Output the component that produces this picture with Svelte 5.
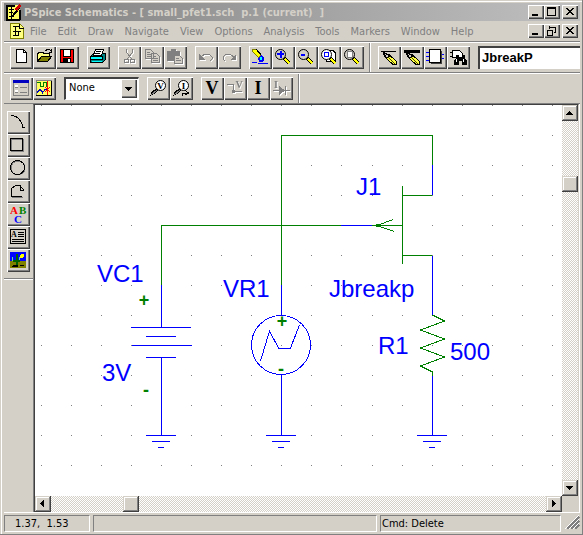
<script>
  const pencil =
    '<path d="M5 6.500l3.500 6M5 6.500l7 3" stroke="#000" stroke-width="1.500" fill="none"/><path d="M8.500 12.500l3.500-3 6.500 6v3h-3.500z" fill="#ffff40" stroke="#000"/><path d="M10 11l7 7" stroke="#404000" fill="none"/>';
  const lens = (fill) =>
    `<path d="M12.500 12.500l5 5" stroke="#000" stroke-width="3.500"/><path d="M13 13l4.500 4.500" stroke="#ffff00" stroke-width="1.600"/><circle cx="8.500" cy="8.500" r="5" fill="${fill}" stroke="#000" shape-rendering="auto"/>`;
  const probe = (letter) =>
    `<path d="M3 19l1.500-4 5-4 2 2-4 4z" fill="#000"/><path d="M4 18l6-5" stroke="#808080"/><circle cx="13.500" cy="8.500" r="5" fill="#fff" stroke="#000" shape-rendering="auto"/><text x="13.500" y="12" font-size="9" font-weight="bold" text-anchor="middle">${letter}</text>`;

  const icons = {
    new: '<path d="M6.500 3.500h7l3 3v10h-10z" fill="#fff" stroke="#000"/><path d="M13.500 3.500v3h3" fill="none" stroke="#000"/>',
    open: '<path d="M4.500 16v-9h1l1-1h3l1 1h6v3" fill="#ffff80" stroke="#000"/><path d="M4.500 15.500l4-5h10l-4 5z" fill="#808000" stroke="#000"/><path d="M12.500 4.500l2-1h2l2 2M18.500 3v3h-3" fill="none" stroke="#000"/>',
    save: '<rect x="4.500" y="3.500" width="13" height="13" fill="#f00" stroke="#000"/><rect x="7" y="4" width="8" height="6" fill="#fff"/><path d="M7.500 4v6h7v-6" fill="none" stroke="#000"/><rect x="7" y="12" width="8" height="5" fill="#000"/><rect x="12" y="13" width="2" height="3" fill="#fff"/>',
    print: '<path d="M3.500 10.500l3-3h12v6l-3 3h-12z" fill="#008080" stroke="#000"/><path d="M6.500 9.500l2-6h8l-2 6z" fill="#fff" stroke="#000"/><path d="M9 5.500h5M8 7.500h5" stroke="#000"/><rect x="3.500" y="10.500" width="12" height="3" fill="#00ffff" stroke="#000"/><path d="M5 15.500h10" stroke="#00ffff"/>',
    cut: '<path d="M8.500 3v3l5 7M14.500 3v3l-5 7" fill="none" stroke="#808080"/><circle cx="8.500" cy="15" r="2" fill="none" stroke="#808080"/><circle cx="14.500" cy="15" r="2" fill="none" stroke="#808080"/>',
    copy: '<path d="M4.500 3.500h5l3 3v6h-8zM10.500 7.500h5l3 3v6h-8z" fill="#d4d0c8" stroke="#808080"/><path d="M6 6.500h3M6 8.500h4M6 10.500h4M12 10.500h3M12 12.500h5M12 14.500h5" stroke="#808080"/>',
    paste: '<path d="M3 5h4v-2h5v2h4v10h-13z" fill="#808080"/><path d="M10.500 9.500h5l3 3v5h-8z" fill="#d4d0c8" stroke="#808080"/><path d="M12 12.500h3M12 14.500h5" stroke="#808080"/>',
    undo: '<path d="M4 8v6h6z" fill="#808080"/><path d="M6 11l4-3h4l3 3v2l-2 2" fill="none" stroke="#808080"/>',
    redo: '<path d="M18 8v6h-6z" fill="#808080"/><path d="M16 11l-4-3h-4l-3 3v2l2 2" fill="none" stroke="#808080"/>',
    brush: '<path d="M3 4l2-1h2l5 6-2 3-7-7z" fill="#ffff00" stroke="#808000"/><path d="M7 3l6 7" stroke="#000"/><path d="M9 12l3-3 3 3v3l-2 1h-3z" fill="#0000ff"/><rect x="11" y="11" width="2" height="3" fill="#00ffff"/><path d="M3 16.500h5M9 17.500h5M14 17.500h5" stroke="#0000ff"/>',
    zoomIn: lens('#d4d0c8') + '<path d="M5 8h7M8.500 5v7" stroke="#0000ff" stroke-width="2"/>',
    zoomOut: lens('#d4d0c8') + '<path d="M6 8.500h4" stroke="#0000ff" stroke-width="2"/>',
    zoomArea: '<path d="M8 4.500h7l2 2v9h-9z" fill="#fff" stroke="#000"/>' + lens('#fff') + '<rect x="6.500" y="6.500" width="4" height="4" fill="#fff" stroke="#0000ff"/>',
    zoomPage: lens('#d4d0c8') + '<rect x="6.500" y="5.500" width="5" height="6" fill="#fff" stroke="#808080"/>',
    wire: '<path d="M3 5.500h15" stroke="#000"/>' + pencil,
    bus: '<path d="M3 5.500h16" stroke="#000" stroke-width="3"/>' + pencil,
    part: '<path d="M2 6.500h4M2 10.500h4M2 14.500h4M16 8.500h4M16 12.500h4" stroke="#0000ff"/><rect x="5.500" y="3.500" width="11" height="13" fill="#fff" stroke="#000"/><path d="M7 17.500h10.500v-13" fill="none" stroke="#404040"/>',
    find: '<path d="M5.500 4v8M5.500 4.500h7l3 3v4h-10M3 6.500h3M3 10.500h3" fill="#fff" stroke="#000"/><path d="M9 9h3v2h3v-2h3v3l2 3v4h-5v-4h-3v4h-5v-4l2-3z" fill="#000"/><path d="M9.500 13v3M16.500 13v3" stroke="#fff"/>',
    setup: '<rect x="3.500" y="3.500" width="15" height="15" fill="#d4d0c8" stroke="#808080"/><path d="M3 4.500h16" stroke="#0000c0" stroke-width="3"/><path d="M5 9.500h3M5 14.500h3" stroke="#fff" stroke-width="3"/><path d="M5 10.500h3M10 10.500h7M5 15.500h3M10 15.500h7" stroke="#808080"/>',
    simulate: '<rect x="3.500" y="3.500" width="15" height="15" fill="#ffff60" stroke="#808080"/><path d="M4 5.500h3v4h3v-4h3v4h2" fill="none" stroke="#008000"/><path d="M4 15.500l3-3 2 2v2l3-4h2" fill="none" stroke="#0000c0"/><path d="M14.500 4v14M12 10l5 5M12 15l5-5" fill="none" stroke="#f00"/><path d="M3 18.500h16M18.500 4v15" stroke="#000"/>',
    probeV: probe('V'),
    probeI: probe('I') + '<path d="M12.500 19v-3h5M15.500 13.500l3 2.500-3 2" fill="none" stroke="#000"/>',
    showV: '<text x="11" y="17" font-size="18" font-weight="bold" text-anchor="middle">V</text>',
    showI: '<text x="11" y="17" font-size="18" font-weight="bold" text-anchor="middle">I</text>',
    netV: '<path d="M3 7.500h6v7h9" fill="none" stroke="#808080"/><circle cx="9.500" cy="14.500" r="1.500" fill="#808080"/><text x="15" y="11" font-size="10" font-weight="bold" text-anchor="middle" fill="#808080">V</text>',
    netI: '<path d="M3 13.500h17M15.500 9v9" stroke="#808080"/><path d="M9 9v9l6-4.500z" fill="#808080"/><text x="6" y="11" font-size="10" font-weight="bold" text-anchor="middle" fill="#808080">I</text>',
    arc: '<path d="M4 4.500c6 0 11 5 12 12h2" fill="none" stroke="#000"/>',
    box: '<rect x="4.500" y="5.500" width="12" height="12" fill="none" stroke="#808080"/><rect x="3.500" y="4.500" width="12" height="12" fill="none" stroke="#000"/>',
    circle: '<circle cx="11" cy="11" r="7" fill="none" stroke="#808080"/><circle cx="10.500" cy="10.500" r="7" fill="none" stroke="#000"/>',
    poly: '<path d="M5 17.500h11" stroke="#808080"/><path d="M15 16.500h-10.500v-8l4-3h5v5h3M13 6l4 4" fill="none" stroke="#000"/>',
    text: '<text x="3" y="11" font-size="11" font-weight="bold" fill="#f00">A</text><text x="12" y="11" font-size="11" font-weight="bold" fill="#008000">B</text><text x="7" y="20" font-size="11" font-weight="bold" fill="#00f">C</text>',
    note: '<rect x="3.500" y="3.500" width="15" height="14" fill="#d4d0c8" stroke="#000"/><path d="M11 6.500h6M11 8.500h6M11 10.500h6M5 13.500h12M5 15.500h12" stroke="#000"/><text x="4" y="11" font-size="8" font-weight="bold">A</text>',
    image: '<rect x="3" y="3" width="16" height="10" fill="#0000ff"/><rect x="3" y="12" width="16" height="7" fill="#808000"/><circle cx="15" cy="7" r="2" fill="#ffff00"/><path d="M9 5v11M5.500 8v3h4M12.500 8v3h-3" fill="none" stroke="#60e090"/><path d="M10 5v11M6 12h3M10 12h3" stroke="#006000" stroke-width="2"/><path d="M4 18l3-2h4v2zM13 16h4v1h-4z" fill="#000"/>'
  };

  const editGroups = [
    [['new', 'New'], ['open', 'Open'], ['save', 'Save']],
    [['print', 'Print']],
    [['cut', 'Cut', true], ['copy', 'Copy', true], ['paste', 'Paste', true]],
    [['undo', 'Undo', true], ['redo', 'Redo', true]],
    [['brush', 'Redraw'], ['zoomIn', 'Zoom in'], ['zoomOut', 'Zoom out'], ['zoomArea', 'Zoom area'], ['zoomPage', 'Fit page']]
  ];
  const drawGroup = [['wire', 'Draw wire'], ['bus', 'Draw bus'], ['part', 'Draw block'], ['find', 'Get new part']];
  const simGroup = [['setup', 'Setup analysis'], ['simulate', 'Simulate']];
  const markGroups = [
    [['probeV', 'Voltage marker'], ['probeI', 'Current marker']],
    [['showV', 'Show voltages'], ['netV', 'Toggle net voltage', true], ['showI', 'Show currents'], ['netI', 'Toggle pin current', true]]
  ];
  const shapes = [['arc', 'Arc'], ['box', 'Box'], ['circle', 'Circle'], ['poly', 'Polyline'], ['text', 'Text'], ['note', 'Text box'], ['image', 'Picture']];
  const menus = ['File', 'Edit', 'Draw', 'Navigate', 'View', 'Options', 'Analysis', 'Tools', 'Markers', 'Window', 'Help'];

  const dots = [];
  for (let r = 0; r < 13; r++) {
    for (let c = 0; c < 18; c++) dots.push([6 + 30 * c + (c > 10 ? 1 : 0), 30 * r]);
  }

  let marker = $state('None');
  let partName = $state('JbreakP');
</script>

{#snippet tool([id, label, off])}
  <button class="tool" class:off aria-label={label} title={label}>
    <svg width="23" height="23" viewBox="0 0 23 23">{@html icons[id]}</svg>
  </button>
{/snippet}

{#snippet caption(restore)}
  <div class="caption">
    <button aria-label="Minimize"><svg width="16" height="14"><path d="M4 10h6" stroke="#000" stroke-width="2" /></svg></button>
    <button aria-label={restore ? 'Restore' : 'Maximize'}>
      <svg width="16" height="14" fill="none" stroke="#000">
        {#if restore}
          <path d="M5.500 5v-3M5 3h7M11.500 3v5h-2M3 6h6M3.500 6v5h5v-5" />
        {:else}
          <rect x="3.500" y="3.500" width="8" height="7" /><path d="M3 3h9" stroke-width="2" />
        {/if}
      </svg>
    </button>
    <button class="close" aria-label="Close"><svg width="16" height="14"><path d="M4 3l7 7M5 3l7 7M11 3l-7 7M12 3l-7 7" stroke="#000" /></svg></button>
  </div>
{/snippet}

{#snippet ground(x)}
  <path class="b" d="M{x - 15} 435.500h30M{x - 9} 441.500h18M{x - 3} 447.500h6" />
{/snippet}

<div class="window">
  <header class="title">
    <svg width="18" height="17">
      <rect x="1" y="1" width="14" height="15" fill="#ffff60" />
      <path d="M1 1.500h9M1.500 1v15M14.500 6v10M1 15.500h14" stroke="#000" stroke-width="2" />
      <path d="M6.500 2v13M4 5.500h5M4 8.500h4M4 12.500h4" stroke="#000" fill="none" />
      <path d="M7 13l7-9" stroke="#000" stroke-width="2" /><path d="M11 6l4.500-5" stroke="#d00000" stroke-width="3" />
    </svg>
    <h1>PSpice Schematics - [ small_pfet1.sch&nbsp; p.1 (current)&nbsp; ]</h1>
    {@render caption(false)}
  </header>
  <nav class="menu">
    <svg width="14" height="16">
      <path d="M.5 .5h9l4 4v11h-13z" fill="#ffff80" stroke="#808000" />
      <path d="M9.500 1v4h4M3 3.500h6M5.500 3v10M3 8.500h8M3 12.500h6M8.500 8v5" stroke="#000" fill="none" />
    </svg>
    {#each menus as m}<button>{m}</button>{/each}
    {@render caption(true)}
  </nav>
  <div class="bar">
    {#each editGroups as g}<div class="group">{#each g as t}{@render tool(t)}{/each}</div>{/each}
    <i class="sep"></i>
    <div class="group">{#each drawGroup as t}{@render tool(t)}{/each}</div>
    <input class="part" aria-label="Part name" bind:value={partName} />
  </div>
  <div class="bar">
    <div class="group">{#each simGroup as t}{@render tool(t)}{/each}</div>
    <div class="combo">
      <select aria-label="Marker colour" bind:value={marker}><option>None</option><option>All</option></select>
      <span class="drop"><svg width="16" height="19"><path d="M4 8h7l-3.500 4z" /></svg></span>
    </div>
    {#each markGroups as g}<div class="group">{#each g as t}{@render tool(t)}{/each}</div>{/each}
    <i class="sep"></i>
  </div>

  <main>
    <aside>{#each shapes as t}{@render tool(t)}{/each}<hr /></aside>
    <div class="doc">
      <svg class="sheet" width="100%" height="100%">
        {#each dots as [x, y]}<rect {x} {y} width="1" height="1" fill="#808080" />{/each}
        <g transform="translate(-35 -105)" fill="none">
          <path class="g" d="M281.500 285v-149.500h151v30M161.500 285v-59.500h180M372 225.500h30M402.500 186v78M402 195.500h30M402 255.500h30M393 219.500l-16 6 17 6M376 224.500h4M376 226.500h4" />
          <path class="g" d="M432.500 315l12 6-24 9 24 9-24 9 24 9-24 9 12 6v4" />
          <path class="b" d="M432.500 165v30M341 225.500h31M432.500 256v59M432.500 376v59M161.500 285v42M131 327.500h60M146 336.500h30M132 345.500h60M146 357.500h30M161.500 357v78M281.500 285v30M281.500 375v60" />
          <circle class="b" cx="281" cy="345" r="29.500" />
          <path class="b" d="M260.500 361l9-30 9 17h12l9-23" />
          {@render ground(161)}
          {@render ground(281)}
          {@render ground(432)}
        </g>
        <g transform="translate(-35 -105)" class="names">
          <text x="97" y="282">VC1</text>
          <text x="102" y="381">3V</text>
          <text x="223" y="297">VR1</text>
          <text x="356" y="195">J1</text>
          <text x="329" y="297">Jbreakp</text>
          <text x="378" y="354">R1</text>
          <text x="450" y="360">500</text>
        </g>
        <g transform="translate(-35 -105)" class="signs">
          <text x="144" y="306">+</text>
          <text x="146" y="396">-</text>
          <text x="282" y="327">+</text>
          <text x="281" y="375">-</text>
        </g>
      </svg>
      <div class="scroll v">
        <button aria-label="Scroll up"><svg width="16" height="16"><path d="M4 10h7l-3.500-4z" /></svg></button>
        <div class="track"><span class="thumb"></span></div>
        <button aria-label="Scroll down"><svg width="16" height="16"><path d="M4 6h7l-3.500 4z" /></svg></button>
      </div>
      <div class="scroll h">
        <button aria-label="Scroll left"><svg width="16" height="16"><path d="M9 4v7l-4-3.500z" /></svg></button>
        <div class="track"><span class="thumb"></span></div>
        <button aria-label="Scroll right"><svg width="16" height="16"><path d="M6 4v7l4-3.500z" /></svg></button>
      </div>
    </div>
  </main>

  <footer>
    <span class="pos">1.37,&nbsp; 1.53</span>
    <span class="msg"></span>
    <span class="cmd">Cmd: Delete</span>
    <svg width="15" height="15"><path d="M2 14l12-12M6 14l8-8M10 14l4-4" stroke="#808080" stroke-width="2" /><path d="M0 14l14-14M4 14l10-10M8 14l6-6" stroke="#fff" /></svg>
  </footer>
</div>

<style>
  :global(body) {
    margin: 0;
  }
  .window {
    box-sizing: border-box;
    display: flex;
    flex-direction: column;
    height: 100vh;
    padding: 3px 3px 2px 4px;
    background: #d4d0c8;
    box-shadow: inset -1px -1px #808080, inset 1px 1px #d4d0c8, inset 2px 2px #fff;
    font: 11px 'DejaVu Sans Condensed', 'DejaVu Sans', sans-serif;
    color: #000;
    overflow: hidden;
  }
  svg {
    display: block;
    flex: none;
    shape-rendering: crispEdges;
    font-family: 'Liberation Serif', serif;
  }
  button {
    padding: 0;
    border: 0;
    background: #d4d0c8;
    font: inherit;
    flex: none;
  }
  .title {
    display: flex;
    align-items: center;
    height: 18px;
    padding: 0 1px;
    background: linear-gradient(90deg, #808080, #c0c0c0);
  }
  h1 {
    margin: 0 0 0 1px;
    font-size: 11px;
    font-weight: bold;
    color: #d4d0c8;
    white-space: nowrap;
  }
  .caption {
    display: flex;
    margin-left: auto;
    padding-right: 1px;
  }
  .menu .caption {
    padding-right: 2px;
  }
  .caption button {
    width: 16px;
    height: 14px;
    box-shadow: inset 1px 1px #fff, inset -1px -1px #404040, inset -2px -2px #808080;
  }
  .caption .close {
    margin-left: 2px;
  }
  .menu {
    display: flex;
    align-items: center;
    height: 20px;
    padding-left: 6px;
    border-bottom: 1px solid #808080;
    color: #808080;
  }
  .menu > button {
    color: inherit;
    margin-left: 11px;
  }
  .menu > svg + button {
    margin-left: 6px;
  }
  .bar {
    display: flex;
    height: 29px;
    align-items: center;
    gap: 8px;
    padding-left: 6px;
    border-top: 1px solid #fff;
    border-bottom: 1px solid #808080;
  }
  .group {
    display: flex;
  }
  .tool {
    width: 23px;
    height: 23px;
    box-shadow: inset 1px 1px #fff, inset -1px -1px #404040, inset -2px -2px #808080;
  }
  .off svg {
    filter: drop-shadow(1px 1px 0 #fff);
  }
  .sep {
    width: 1px;
    align-self: stretch;
    margin-left: -3px;
    margin-right: -1px;
    border-left: 1px solid #808080;
    background: #fff;
  }
  .part {
    flex: 1;
    min-width: 0;
    box-sizing: border-box;
    height: 23px;
    padding: 0 2px 2px;
    border: solid #404040;
    border-width: 2px 0 0 2px;
    background: #fff;
    font: bold 13px 'Liberation Sans', sans-serif;
  }
  .combo {
    position: relative;
    width: 75px;
    height: 23px;
  }
  select {
    appearance: none;
    box-sizing: border-box;
    width: 100%;
    height: 100%;
    padding: 0 2px 3px 3px;
    border: 1px solid #fff;
    border-top: 2px solid #404040;
    border-left: 2px solid #404040;
    border-radius: 0;
    background: #fff;
    color: #000;
    font: inherit;
  }
  .drop {
    position: absolute;
    top: 2px;
    right: 2px;
    background: #d4d0c8;
    box-shadow: inset 1px 1px #fff, inset -1px -1px #404040, inset -2px -2px #808080;
    pointer-events: none;
  }
  main {
    flex: 1;
    min-height: 0;
    display: flex;
    border-right: 1px solid #fff;
  }
  aside {
    flex: none;
    width: 29px;
    box-sizing: border-box;
    display: flex;
    flex-direction: column;
    align-items: center;
    padding-top: 7px;
  }
  hr {
    align-self: stretch;
    margin: 6px 0 0;
    border: solid #808080;
    border-width: 1px 0 0;
    border-bottom: 1px solid #fff;
  }
  .doc {
    flex: 1;
    min-width: 0;
    display: grid;
    grid-template: minmax(0, 1fr) 16px / minmax(0, 1fr) 16px;
    border-left: 1px solid #808080;
    border-top: 1px solid #404040;
    box-shadow: inset 1px 0 #404040;
    padding-left: 1px;
    border-right: 1px solid #d4d0c8;
  }
  .sheet {
    background: #fff;
    font-family: 'Liberation Sans', Arial, sans-serif;
  }
  .g {
    stroke: #008000;
  }
  .b {
    stroke: #0000ff;
  }
  .names {
    fill: #0000ff;
    font-size: 24px;
  }
  .signs {
    fill: #008000;
    font-size: 18px;
    font-weight: bold;
    text-anchor: middle;
  }
  .scroll {
    display: flex;
    min-width: 0;
    min-height: 0;
  }
  .v {
    flex-direction: column;
  }
  .scroll button,
  .thumb {
    width: 16px;
    height: 16px;
    background: #d4d0c8;
    box-shadow: inset -1px -1px #404040, inset 1px 1px #d4d0c8, inset -2px -2px #808080, inset 2px 2px #fff;
  }
  .track {
    flex: 1;
    display: flex;
    background: repeating-conic-gradient(#fff 0 25%, #d4d0c8 0 50%) 0 0 / 2px 2px;
  }
  .v .track {
    flex-direction: column;
    padding-top: 55px;
  }
  .h .track {
    padding-left: 72px;
  }
  footer {
    display: flex;
    gap: 3px;
    height: 17px;
    padding: 2px 0 1px;
    border-top: 1px solid #fff;
    line-height: 15px;
  }
  footer span {
    box-sizing: border-box;
    border: 1px solid #fff;
    border-top-color: #808080;
    border-left-color: #808080;
    white-space: nowrap;
  }
  .pos {
    width: 86px;
    padding-left: 10px;
  }
  .msg {
    flex: 1;
  }
  .cmd {
    width: 181px;
    padding-left: 1px;
  }
  footer svg {
    margin-left: 1px;
  }
</style>
